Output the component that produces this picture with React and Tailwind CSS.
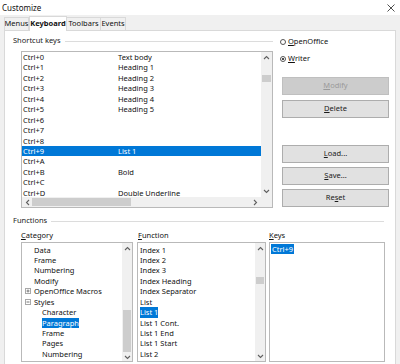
import React from "react";

const Up = () => (
  <svg width="7" height="5" viewBox="0 0 7 5"><polyline points="1,4 3.5,1.5 6,4" fill="none" stroke="#606060" strokeWidth="1.1" /></svg>
);
const Down = () => (
  <svg width="7" height="5" viewBox="0 0 7 5"><polyline points="1,1 3.5,3.5 6,1" fill="none" stroke="#606060" strokeWidth="1.1" /></svg>
);
const Left = () => (
  <svg width="5" height="7" viewBox="0 0 5 7"><polyline points="4,1 1.5,3.5 4,6" fill="none" stroke="#606060" strokeWidth="1.1" /></svg>
);
const Right = () => (
  <svg width="5" height="7" viewBox="0 0 5 7"><polyline points="1,1 3.5,3.5 1,6" fill="none" stroke="#606060" strokeWidth="1.1" /></svg>
);

function VScroll({ w, thumbTop, thumbH }) {
  return (
    <div className={`${w} bg-[#f0f0f0] flex flex-col shrink-0 h-full`}>
      <div className="h-[10px] flex items-center justify-center shrink-0"><Up /></div>
      <div className="flex-1 flex flex-col">
        <div className="bg-[#cdcdcd] mx-[1px]" style={{ marginTop: thumbTop, height: thumbH }} />
      </div>
      <div className="h-[10px] flex items-center justify-center shrink-0"><Down /></div>
    </div>
  );
}

const ROW = "h-[10.45px] leading-[10.45px] whitespace-nowrap";

function Expander({ minus }) {
  return (
    <svg width="6" height="6" viewBox="0 0 6 6" className="mr-[3px]">
      <rect x="0.5" y="0.5" width="5" height="5" fill="#fff" stroke="#a8a8a8" />
      <line x1="1.5" y1="3" x2="4.5" y2="3" stroke="#777" />
      {!minus && <line x1="3" y1="1.5" x2="3" y2="4.5" stroke="#777" />}
    </svg>
  );
}

function Btn({ children, disabled, className = "" }) {
  return (
    <div
      className={`h-[18px] flex items-center justify-center border ${
        disabled ? "bg-[#cccccc] border-[#bfbfbf] text-[#9a9a9a]" : "bg-[#e1e1e1] border-[#adadad] text-[#1a1a1a]"
      } ${className}`}
    >
      {children}
    </div>
  );
}

export default function App() {
  const shortcuts = [
    ["Ctrl+0", "Text body"],
    ["Ctrl+1", "Heading 1"],
    ["Ctrl+2", "Heading 2"],
    ["Ctrl+3", "Heading 3"],
    ["Ctrl+4", "Heading 4"],
    ["Ctrl+5", "Heading 5"],
    ["Ctrl+6", ""],
    ["Ctrl+7", ""],
    ["Ctrl+8", ""],
    ["Ctrl+9", "List 1"],
    ["Ctrl+A", ""],
    ["Ctrl+B", "Bold"],
    ["Ctrl+C", ""],
    ["Ctrl+D", "Double Underline"],
  ];
  const categories = [
    { t: "Data", ind: 12 },
    { t: "Frame", ind: 12 },
    { t: "Numbering", ind: 12 },
    { t: "Modify", ind: 12 },
    { t: "OpenOffice Macros", ind: 3, exp: "plus" },
    { t: "Styles", ind: 3, exp: "minus" },
    { t: "Character", ind: 20 },
    { t: "Paragraph", ind: 20, sel: true },
    { t: "Frame", ind: 20 },
    { t: "Pages", ind: 20 },
    { t: "Numbering", ind: 20 },
  ];
  const functions = [
    "Index 1",
    "Index 2",
    "Index 3",
    "Index Heading",
    "Index Separator",
    "List",
    "List 1",
    "List 1 Cont.",
    "List 1 End",
    "List 1 Start",
    "List 2",
  ];

  return (
    <div className="w-[400px] h-[364px] overflow-hidden bg-[#f0f0f0] text-[7.5px] text-[#111] font-['Noto_Sans',sans-serif]">
      {/* title bar */}
      <div className="h-[15px] bg-white flex items-center justify-between pl-[2px] pr-[5px] text-[8px]">
        <span>Customize</span>
        <svg width="8" height="8" viewBox="0 0 8 8">
          <line x1="0.5" y1="0.5" x2="7.5" y2="7.5" stroke="#222" strokeWidth="0.8" />
          <line x1="7.5" y1="0.5" x2="0.5" y2="7.5" stroke="#222" strokeWidth="0.8" />
        </svg>
      </div>
      {/* tabs */}
      <div className="h-[15px] flex items-end pl-[4px]">
        <div className="h-[13px] w-[25px] border border-b-0 border-[#d9d9d9] flex items-center justify-center">Menus</div>
        <div className="h-[15px] w-[38px] bg-white border border-b-0 border-[#d9d9d9] flex items-center justify-center font-bold relative top-[1px]">Keyboard</div>
        <div className="h-[13px] w-[34px] border border-b-0 border-l-0 border-[#d9d9d9] flex items-center justify-center">Toolbars</div>
        <div className="h-[13px] w-[25px] border border-b-0 border-l-0 border-[#d9d9d9] flex items-center justify-center">Events</div>
      </div>
      {/* page */}
      <div className="ml-[4px] mr-[4px] h-[360px] bg-white border border-[#d9d9d9]">
        <div className="flex">
          {/* left */}
          <div className="w-[268px]">
            <div className="h-[20px] flex items-center pl-[8px]">
              <span className="text-[#222]">Shortcut keys</span>
              <div className="flex-1 ml-[4px] h-[1px] bg-[#dcdcdc]" />
            </div>
            <div className="ml-[16px] w-[252px] h-[157px] border border-[#b9b9b9] flex flex-col">
              <div className="flex h-[145px]">
                <div className="flex-1 overflow-hidden">
                  {shortcuts.map(([k, v], i) => (
                    <div key={i} className={`${ROW} flex ${i === 9 ? "bg-[#0078d7] text-white" : ""}`}>
                      <span className="w-[96px] pl-[1px]">{k}</span>
                      <span>{v}</span>
                    </div>
                  ))}
                </div>
                <div className="w-[11px] h-full bg-[#f0f0f0] flex flex-col">
                  <div className="h-[10px] flex items-center justify-center"><Up /></div>
                  <div className="mt-[13px] h-[7px] bg-[#cdcdcd] mx-[1px]" />
                  <div className="flex-1" />
                  <div className="h-[11px] flex items-center justify-center"><Down /></div>
                </div>
              </div>
              <div className="flex h-[10px] bg-[#f0f0f0]">
                <div className="w-[10px] flex items-center justify-center"><Left /></div>
                <div className="w-[99px] bg-[#cdcdcd] my-[1px]" />
                <div className="flex-1" />
                <div className="w-[10px] flex items-center justify-center"><Right /></div>
                <div className="w-[12px]" />
              </div>
            </div>
          </div>
          {/* right */}
          <div className="ml-[9px] w-[107px] pt-[6px] flex flex-col">
            <div className="h-[10px] flex items-center -ml-[2px]">
              <span className="w-[6px] h-[6px] rounded-full border border-[#555] bg-white mr-[2px]" />
              <span><u>O</u>penOffice</span>
            </div>
            <div className="h-[10px] mt-[7px] flex items-center -ml-[2px]">
              <span className="w-[6px] h-[6px] rounded-full border border-[#555] bg-white mr-[2px] flex items-center justify-center">
                <span className="w-[2px] h-[2px] rounded-full bg-[#111]" />
              </span>
              <span><u>W</u>riter</span>
            </div>
            <Btn disabled className="mt-[13px]"><u>M</u>odify</Btn>
            <Btn className="mt-[5px]"><u>D</u>elete</Btn>
            <Btn className="mt-[27px]"><u>L</u>oad...</Btn>
            <Btn className="mt-[4px]"><u>S</u>ave...</Btn>
            <Btn className="mt-[4px]">Re<u>s</u>et</Btn>
          </div>
        </div>
        {/* functions */}
        <div className="mt-[6px] h-[14px] flex items-center pl-[8px] pr-[11px]">
          <span className="text-[#222]">Functions</span>
          <div className="flex-1 ml-[4px] h-[1px] bg-[#dcdcdc]" />
        </div>
        <div className="mt-[3px] h-[10px] flex items-center pl-[16px]">
          <span className="w-[116px]"><u>C</u>ategory</span>
          <span className="w-[132px] pl-[1px]"><u>F</u>unction</span>
          <span><u>K</u>eys</span>
        </div>
        <div className="mt-[1px] flex pl-[16px]">
          <div className="w-[112px] h-[120px] border border-[#b9b9b9] flex">
            <div className="flex-1 pt-[1.5px] overflow-hidden">
              {categories.map((c, i) => (
                <div key={i} className={`${ROW} flex items-center`} style={{ paddingLeft: c.ind }}>
                  {c.exp && <Expander minus={c.exp === "minus"} />}
                  <span className={c.sel ? "bg-[#0078d7] text-white" : ""}>{c.t}</span>
                </div>
              ))}
            </div>
            <VScroll w="w-[10px]" thumbTop={57} thumbH={42} />
          </div>
          <div className="ml-[4px] w-[129px] h-[120px] border border-[#b9b9b9] flex">
            <div className="flex-1 pt-[1.5px] pl-[2px] overflow-hidden">
              {functions.map((f, i) => (
                <div key={i} className={`${ROW} flex items-center`}>
                  <span className={i === 6 ? "bg-[#0078d7] text-white" : ""}>{f}</span>
                </div>
              ))}
            </div>
            <VScroll w="w-[10px]" thumbTop={24} thumbH={7} />
          </div>
          <div className="ml-[3px] w-[116px] h-[120px] border border-[#b9b9b9] pt-[1px] pl-[1px]">
            <div className={`${ROW} flex items-center`}>
              <span className="bg-[#0078d7] text-white px-[1px]">Ctrl+9</span>
            </div>
          </div>
        </div>
      </div>
    </div>
  );
}
